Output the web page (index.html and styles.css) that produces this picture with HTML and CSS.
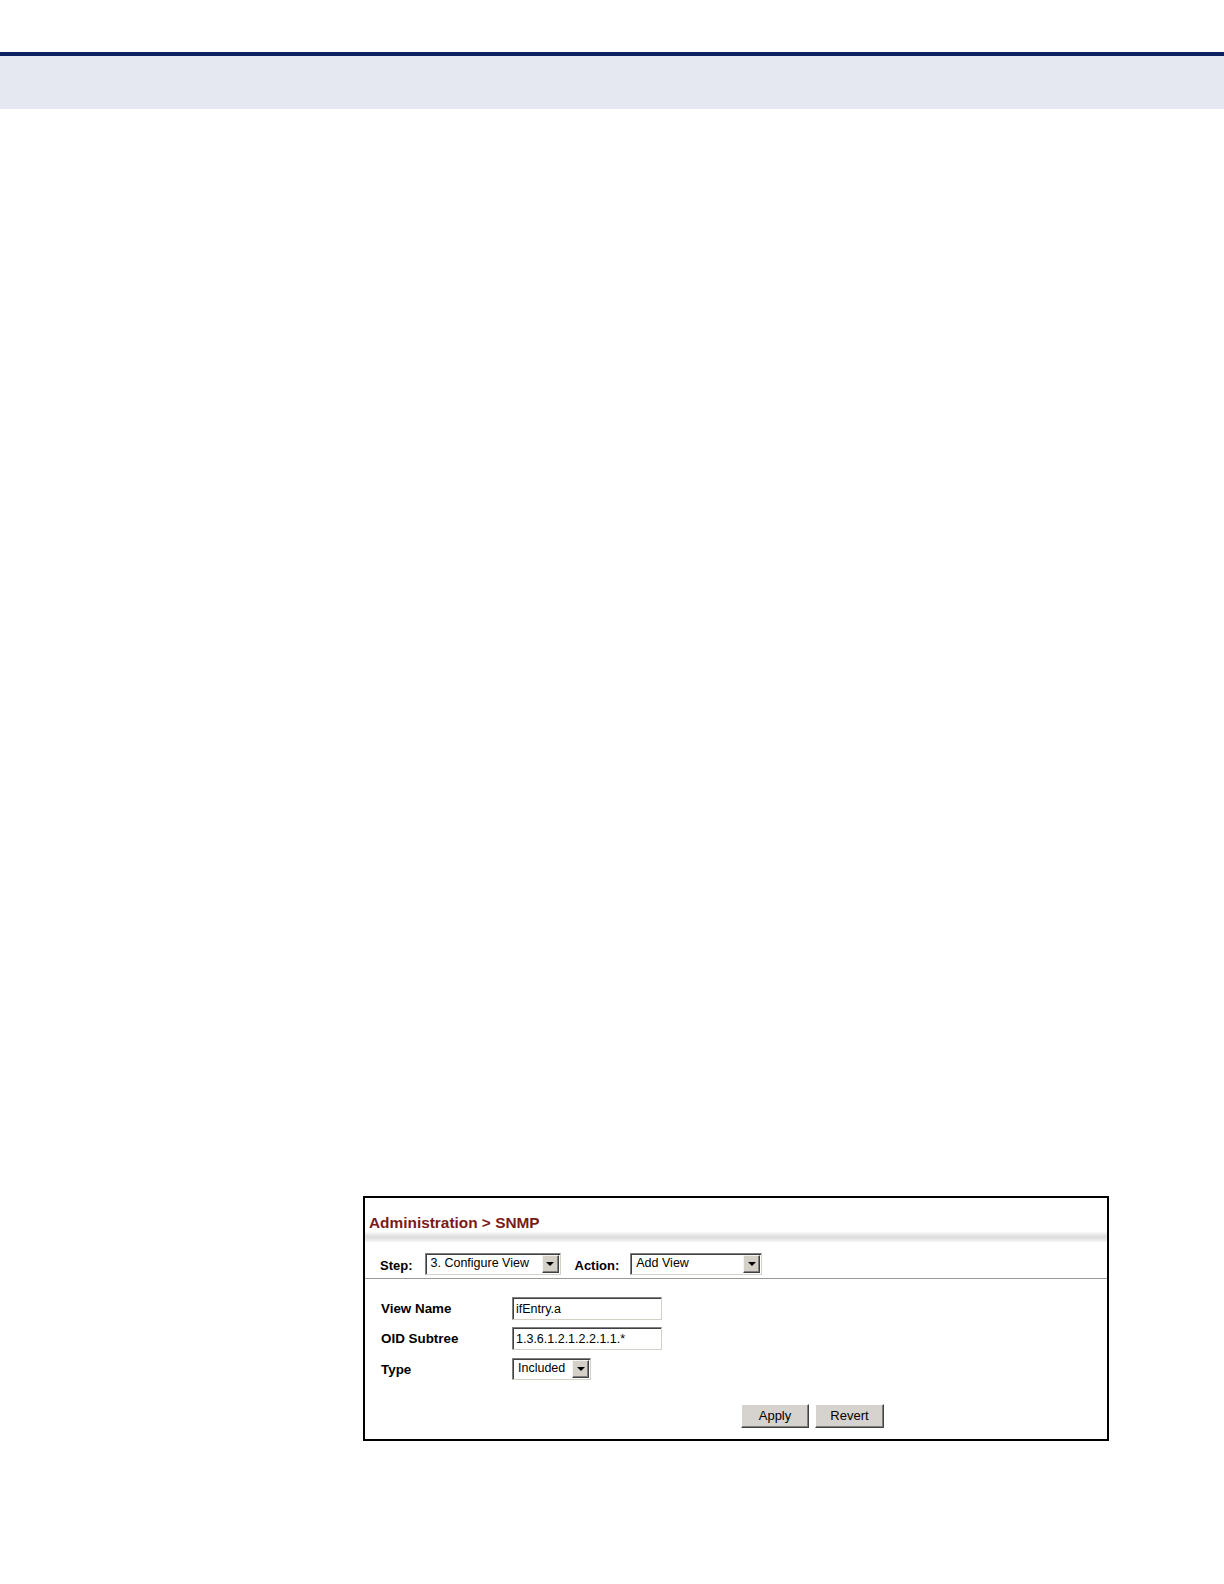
FILE: index.html
```html
<!DOCTYPE html>
<html>
<head>
<meta charset="utf-8">
<link rel="stylesheet" href="styles.css">
</head>
<body>
<div class="page-head">
  <div class="head-line"></div>
  <div class="head-band"></div>
</div>
<div class="content">
  <div class="frame">
    <div class="title">Administration &gt; SNMP</div>
    <div class="title-shade"></div>
    <div class="step-row">
      <span class="lbl">Step:</span>
      <div class="select sel-step"><span class="sel-text">3. Configure View</span><span class="arrow"></span></div>
      <span class="lbl lbl-action">Action:</span>
      <div class="select sel-action"><span class="sel-text">Add View</span><span class="arrow"></span></div>
    </div>
    <div class="form">
      <div class="row">
        <span class="flabel">View Name</span>
        <div class="input">ifEntry.a</div>
      </div>
      <div class="row row-oid">
        <span class="flabel">OID Subtree</span>
        <div class="input">1.3.6.1.2.1.2.2.1.1.*</div>
      </div>
      <div class="row row-type">
        <span class="flabel">Type</span>
        <div class="select sel-type"><span class="sel-text">Included</span><span class="arrow"></span></div>
      </div>
      <div class="buttons">
        <div class="btn btn-apply">Apply</div>
        <div class="btn btn-revert">Revert</div>
      </div>
    </div>
  </div>
</div>
</body>
</html>
```
FILE: styles.css
```css
html, body {
  margin: 0;
  padding: 0;
  background: #ffffff;
  font-family: "Liberation Sans", Arial, sans-serif;
  color: #000;
}
.page-head {
  padding-top: 52px;
}
.head-line {
  height: 4px;
  background: #0b2160;
}
.head-band {
  height: 53px;
  background: #e5e8f0;
}
.content {
  padding-top: 1087px;
  padding-left: 363px;
}
.frame {
  width: 742px;
  border: 2px solid #000;
  background: #fff;
}
.title {
  padding: 16px 0 0 4px;
  height: 18px;
  line-height: 18px;
  font-size: 15.4px;
  font-weight: bold;
  color: #7b1a1a;
}
.title-shade {
  height: 10px;
  background: linear-gradient(#fafafa, #dcdcdc 50%, #f6f6f6);
}
.step-row {
  display: flex;
  align-items: center;
  padding: 11px 0 3px 15px;
  border-bottom: 1px solid #9a9a9a;
}
.lbl {
  font-size: 13px;
  font-weight: bold;
  padding-top: 3px;
}
.lbl-action {
  margin-left: 14px;
}
.select {
  display: flex;
  align-items: center;
  justify-content: space-between;
  box-sizing: border-box;
  height: 22px;
  background: #fff;
  border-top: 1px solid #808080;
  border-left: 1px solid #808080;
  border-right: 1px solid #d4d0c8;
  border-bottom: 1px solid #d4d0c8;
  box-shadow: inset 1px 1px 0 #404040;
  padding: 1px 1px 1px 5px;
  font-size: 12.5px;
}
.sel-step {
  width: 136px;
  margin-left: 12px;
}
.sel-action {
  width: 132px;
  margin-left: 11px;
}
.sel-type {
  width: 79px;
}
.sel-text {
  line-height: 16px;
  padding-bottom: 2px;
}
.arrow {
  position: relative;
  box-sizing: border-box;
  width: 17px;
  height: 18px;
  background: #d4d0c8;
  border-top: 1px solid #f4f4f4;
  border-left: 1px solid #f4f4f4;
  border-right: 1px solid #404040;
  border-bottom: 1px solid #404040;
  box-shadow: inset -1px -1px 0 #808080;
}
.arrow::after {
  content: "";
  position: absolute;
  left: 3.5px;
  top: 6px;
  border-left: 4px solid transparent;
  border-right: 4px solid transparent;
  border-top: 4.5px solid #000;
}
.form {
  padding: 18px 0 11px 16px;
}
.row {
  display: flex;
  align-items: center;
  height: 23px;
  margin-bottom: 7px;
}
.row-oid {
  margin-bottom: 8px;
}
.row-type {
  height: 22px;
  margin-bottom: 0;
}
.flabel {
  width: 131px;
  font-size: 13.4px;
  font-weight: bold;
}
.input {
  box-sizing: border-box;
  width: 150px;
  height: 23px;
  border-top: 1px solid #808080;
  border-left: 1px solid #808080;
  border-right: 1px solid #d4d0c8;
  border-bottom: 1px solid #d4d0c8;
  box-shadow: inset 1px 1px 0 #404040;
  padding: 2px 0 0 3px;
  font-size: 12.5px;
  line-height: 18px;
}
.buttons {
  display: flex;
  gap: 6px;
  padding-left: 360px;
  margin-top: 24px;
}
.btn {
  box-sizing: border-box;
  height: 24px;
  background: #d6d3ce;
  border-top: 1px solid #fdfdfd;
  border-left: 1px solid #fdfdfd;
  border-right: 1px solid #404040;
  border-bottom: 1px solid #404040;
  box-shadow: inset -1px -1px 0 #808080;
  font-size: 13px;
  line-height: 22px;
  text-align: center;
}
.btn-apply {
  width: 68px;
}
.btn-revert {
  width: 69px;
}
```
